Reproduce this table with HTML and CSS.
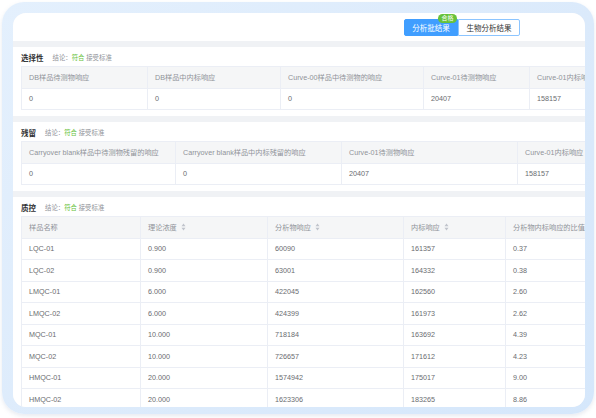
FILE: index.html
```html
<!DOCTYPE html>
<html lang="zh">
<head>
<meta charset="utf-8">
<link rel="stylesheet" href="styles.css">
</head>
<body>
<div class="frame">
  <div class="panel">
    <div class="topbar">
      <div class="tabs">
        <span class="tab active">分析批结果<span class="badge">合格</span></span>
        <span class="tab">生物分析结果</span>
      </div>
    </div>

    <section class="card">
      <div class="card-title"><span class="name">选择性</span><span class="concl">结论：<span class="ok">符合</span> 接受标准</span></div>
      <table class="grid">
        <colgroup><col style="width:126px"><col style="width:133px"><col style="width:143px"><col style="width:106px"><col style="width:100px"></colgroup>
        <thead><tr><th>DB样品待测物响应</th><th>DB样品中内标响应</th><th>Curve-00样品中待测物的响应</th><th>Curve-01待测物响应</th><th>Curve-01内标响应</th></tr></thead>
        <tbody><tr><td>0</td><td>0</td><td>0</td><td>20407</td><td>158157</td></tr></tbody>
      </table>
    </section>

    <section class="card">
      <div class="card-title"><span class="name">残留</span><span class="concl">结论：<span class="ok">符合</span> 接受标准</span></div>
      <table class="grid">
        <colgroup><col style="width:154px"><col style="width:166px"><col style="width:176px"><col style="width:100px"></colgroup>
        <thead><tr><th>Carryover blank样品中待测物残留的响应</th><th>Carryover blank样品中内标残留的响应</th><th>Curve-01待测物响应</th><th>Curve-01内标响应</th></tr></thead>
        <tbody><tr><td>0</td><td>0</td><td>20407</td><td>158157</td></tr></tbody>
      </table>
    </section>

    <section class="card last">
      <div class="card-title"><span class="name">质控</span><span class="concl">结论：<span class="ok">符合</span> 接受标准</span></div>
      <table class="grid">
        <colgroup><col style="width:119px"><col style="width:127px"><col style="width:136px"><col style="width:102px"><col style="width:110px"></colgroup>
        <thead><tr>
          <th>样品名称</th>
          <th>理论浓度<svg class="sort" viewBox="0 0 6 10" width="5" height="8"><path d="M3 0.5 L5.5 4 H0.5 Z M3 9.5 L5.5 6 H0.5 Z" fill="#c0c4cc"/></svg></th>
          <th>分析物响应<svg class="sort" viewBox="0 0 6 10" width="5" height="8"><path d="M3 0.5 L5.5 4 H0.5 Z M3 9.5 L5.5 6 H0.5 Z" fill="#c0c4cc"/></svg></th>
          <th>内标响应<svg class="sort" viewBox="0 0 6 10" width="5" height="8"><path d="M3 0.5 L5.5 4 H0.5 Z M3 9.5 L5.5 6 H0.5 Z" fill="#c0c4cc"/></svg></th>
          <th>分析物内标响应的比值</th>
        </tr></thead>
        <tbody>
          <tr><td>LQC-01</td><td>0.900</td><td>60090</td><td>161357</td><td>0.37</td></tr>
          <tr><td>LQC-02</td><td>0.900</td><td>63001</td><td>164332</td><td>0.38</td></tr>
          <tr><td>LMQC-01</td><td>6.000</td><td>422045</td><td>162560</td><td>2.60</td></tr>
          <tr><td>LMQC-02</td><td>6.000</td><td>424399</td><td>161973</td><td>2.62</td></tr>
          <tr><td>MQC-01</td><td>10.000</td><td>718184</td><td>163692</td><td>4.39</td></tr>
          <tr><td>MQC-02</td><td>10.000</td><td>726657</td><td>171612</td><td>4.23</td></tr>
          <tr><td>HMQC-01</td><td>20.000</td><td>1574942</td><td>175017</td><td>9.00</td></tr>
          <tr><td>HMQC-02</td><td>20.000</td><td>1623306</td><td>183265</td><td>8.86</td></tr>
        </tbody>
      </table>
    </section>
  </div>
</div>
</body>
</html>
```

FILE: styles.css
```css
* { box-sizing: border-box; }
html, body { margin: 0; padding: 0; }
body {
  background: #ffffff;
  width: 596px;
  height: 418px;
  overflow: hidden;
  font-family: "Liberation Sans", "Noto Sans CJK SC", sans-serif;
  padding: 2px 2px 4px 2px;
}
.frame {
  width: 592px;
  height: 412px;
  border-radius: 22px;
  background: linear-gradient(135deg, #e4f0fd 0%, #dbeafb 60%, #d5e7fb 100%);
  box-shadow: 0 2px 4px rgba(120, 140, 170, 0.18);
  padding: 11px 9px 7px 11px;
}
.panel {
  width: 100%;
  height: 100%;
  border-radius: 13px;
  background: #f0f2f5;
  overflow: hidden;
  display: flex;
  flex-direction: column;
  gap: 6px;
}
.topbar {
  height: 28px;
  flex: none;
  background: #fff;
  display: flex;
  justify-content: flex-end;
  padding: 6px 65px 0 0;
}
.tabs {
  display: flex;
  height: 17px;
}
.tab {
  position: relative;
  display: flex;
  align-items: center;
  justify-content: center;
  font-size: 7.5px;
  color: #303133;
  border: 1px solid #8cc5ff;
  background: #fff;
  width: 62px;
  border-radius: 0 2px 2px 0;
}
.tab.active {
  width: 54px;
  background: #409eff;
  border-color: #409eff;
  color: #fff;
  border-radius: 2px 0 0 2px;
}
.badge {
  position: absolute;
  top: -6px;
  right: 0;
  background: #67c23a;
  color: #fff;
  font-size: 6px;
  line-height: 9px;
  height: 9px;
  padding: 0 3.5px;
  border-radius: 5px;
}
.card {
  flex: none;
  background: #fff;
  padding: 0 0 6px 8px;
  overflow: hidden;
}
.card.last { flex: 1; }
.card-title {
  height: 19px;
  display: flex;
  align-items: center;
  padding-top: 1px;
}
.card-title .name {
  font-size: 7.5px;
  font-weight: bold;
  color: #303133;
  margin-right: 9px;
}
.concl {
  font-size: 6.4px;
  color: #909399;
}
.concl .ok { color: #67c23a; }
.grid {
  border-collapse: collapse;
  table-layout: fixed;
  width: max-content;
  font-size: 7.2px;
}
.grid th, .grid td {
  height: 21.5px;
  padding: 0 7px;
  text-align: left;
  white-space: nowrap;
  overflow: hidden;
  border: 1px solid #ebeef5;
  vertical-align: middle;
}
.grid th {
  background: #f5f6f7;
  color: #909399;
  font-weight: normal;
}
.grid td {
  color: #6a6c70;
}
.sort {
  margin-left: 4px;
  vertical-align: -1px;
}
```
